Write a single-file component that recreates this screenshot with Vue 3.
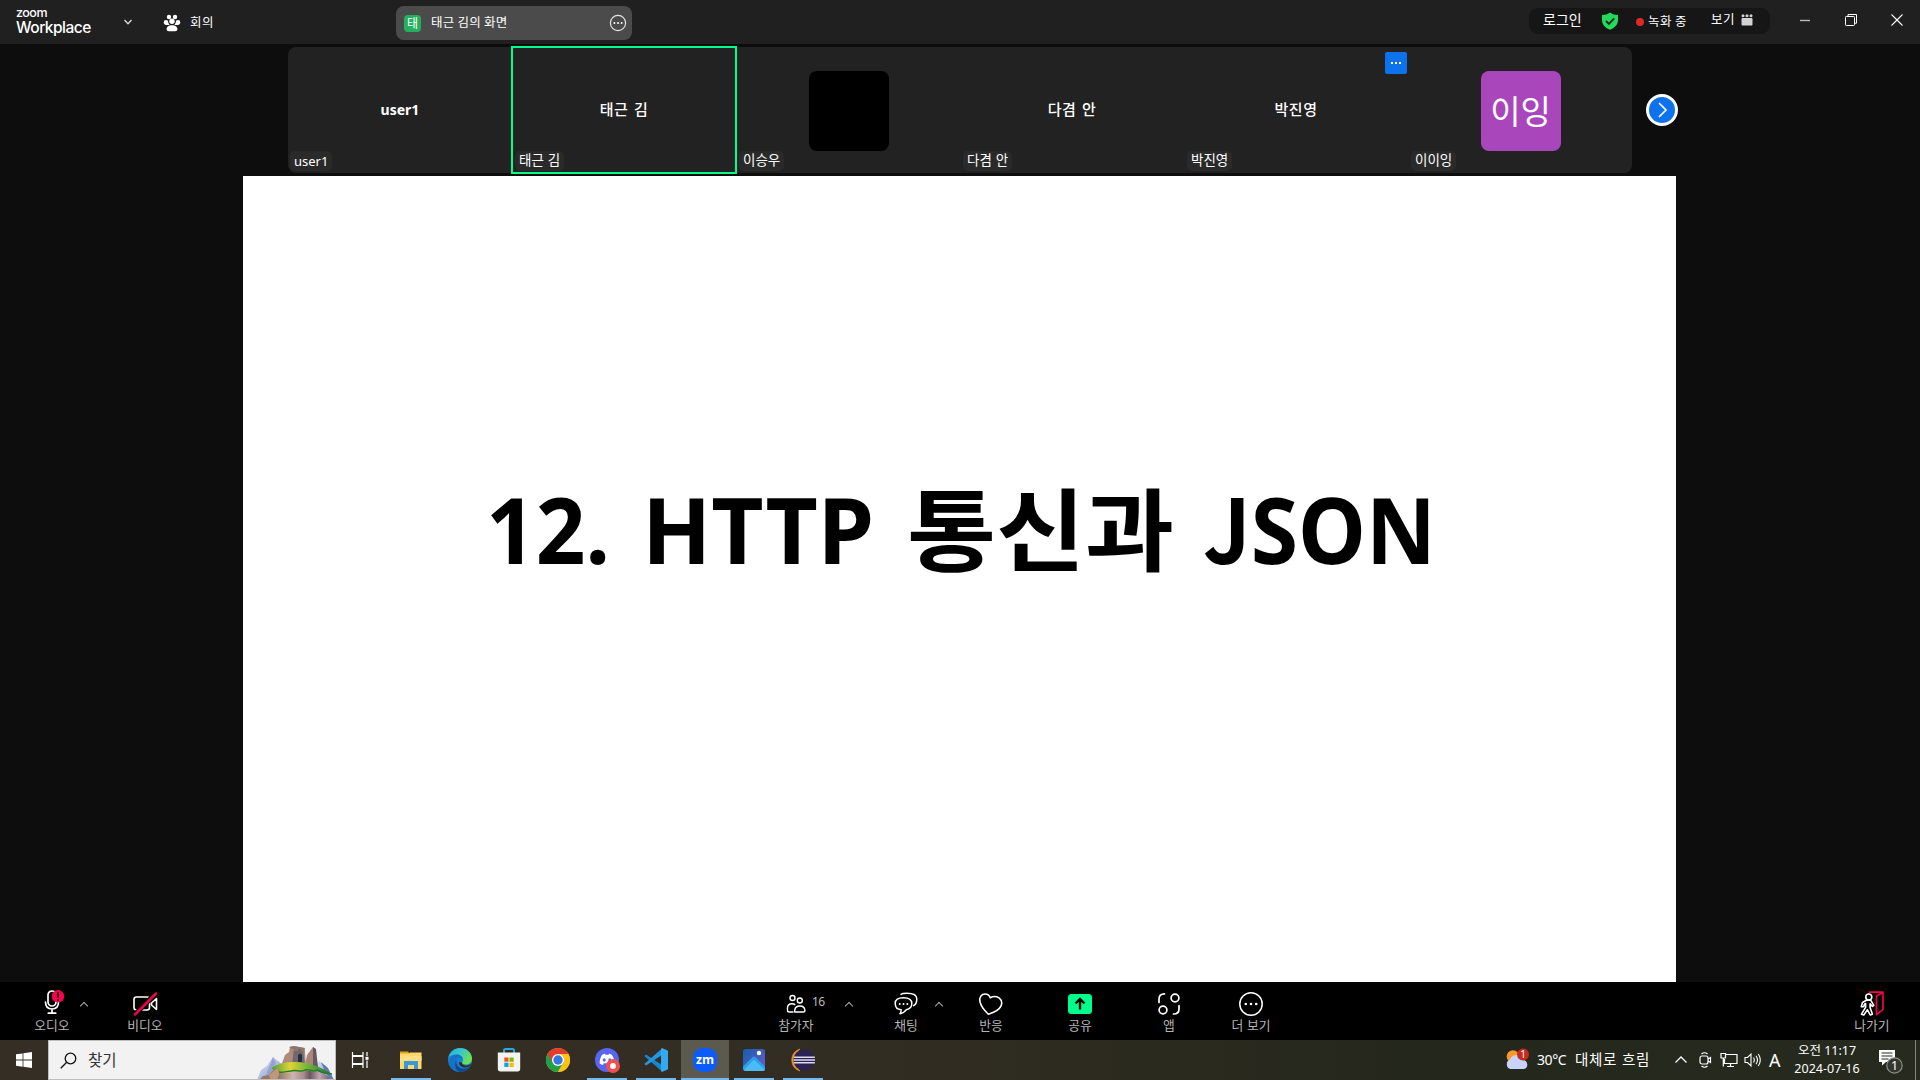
<script setup>
const participants = [
  { name: 'user1', center: 'user1', latin: true },
  { name: '태근 김', center: '태근 김', active: true },
  { name: '이승우', avatar: 'black' },
  { name: '다겸 안', center: '다겸 안' },
  { name: '박진영', center: '박진영', more: true },
  { name: '이이잉', avatar: 'purple', initials: '이잉' },
]
</script>

<template>
  <div class="desktop">
    <header class="titlebar">
      <div class="brand">
        <span class="brand-top">zoom</span>
        <span class="brand-main">Workplace</span>
      </div>
      <svg class="brand-chev" width="10" height="8" viewBox="0 0 10 8"><path d="M1.5 2 5 5.8 8.5 2" fill="none" stroke="#ddd" stroke-width="1.3" /></svg>
      <svg class="paw" width="18" height="18" viewBox="0 0 18 18" fill="#fff">
        <circle cx="6" cy="3" r="2.2" /><circle cx="12" cy="3" r="2.2" />
        <circle cx="3" cy="8.4" r="2.3" /><circle cx="15" cy="8.4" r="2.3" />
        <circle cx="9" cy="7.2" r="2.7" />
        <path d="M1.2 9h4.2l1.2 2H3zM16.800 9h-4.200l-1.200 2H15z" />
        <path d="M3.600 15.200c0-2.700 2.400-4 5.400-4s5.400 1.300 5.400 4c0 1.300-1 2-2.300 2H5.900c-1.300 0-2.300-.7-2.300-2z" />
      </svg>
      <span class="meeting">회의</span>
      <div class="share-tab">
        <span class="tab-badge">태</span>
        <span class="tab-label">태근 김의 화면</span>
        <svg width="18" height="18" viewBox="0 0 18 18"><circle cx="9" cy="9" r="7.600" fill="none" stroke="#e4e4e4" stroke-width="1.2" /><g fill="#fff"><circle cx="5.400" cy="9" r="1" /><circle cx="9" cy="9" r="1" /><circle cx="12.600" cy="9" r="1" /></g></svg>
      </div>
      <div class="status-pill">
        <span class="login">로그인</span>
        <svg class="shield" width="18" height="18" viewBox="0 0 18 18"><path d="M9 .5c2 1.700 4.700 2.500 8 2.500v5c0 4.700-3.400 8-8 9.700C4.400 16 1 12.700 1 8V3C4.300 3 7 2.200 9 .5z" fill="#23d959" /><path d="m5 9 2.900 2.900 5.300-5.600" fill="none" stroke="#1a2a1e" stroke-width="1.900" /></svg>
        <span class="rec-dot"></span>
        <span class="rec">녹화 중</span>
        <span class="view">보기</span>
        <svg class="clap" width="12" height="12" viewBox="0 0 12 12" fill="#d2d2d2"><rect x=".5" y="4" width="11" height="7.500" rx="1" /><circle cx="2" cy="1.800" r="1.500" /><circle cx="6" cy="1.800" r="1.500" /><circle cx="10" cy="1.800" r="1.500" /></svg>
      </div>
      <div class="win-btns">
        <svg width="14" height="14" viewBox="0 0 14 14"><path d="M2 7.500h10" stroke="#bbb" stroke-width="1.400" /></svg>
        <svg width="14" height="14" viewBox="0 0 14 14" fill="none" stroke="#fff"><rect x="1.500" y="3.500" width="9" height="9" rx=".8" /><path d="M4 3.200V1.500h8.500v8.700h-1.700" /></svg>
        <svg width="14" height="14" viewBox="0 0 14 14"><path d="m1.500 1.500 11 11m0-11-11 11" stroke="#fff" stroke-width="1.100" /></svg>
      </div>
    </header>

    <main class="stage">
      <div class="strip-row">
        <div class="strip">
          <div v-for="p in participants" :key="p.name" class="tile" :class="{ active: p.active }">
            <span v-if="p.center" class="tile-name" :class="{ latin: p.latin }">{{ p.center }}</span>
            <span v-if="p.avatar" class="avatar" :class="p.avatar">{{ p.initials }}</span>
            <span class="tag" :class="{ 'tag-latin': p.latin }">{{ p.name }}</span>
            <span v-if="p.more" class="more"><i></i><i></i><i></i></span>
          </div>
        </div>
        <div class="next">
          <svg width="32" height="32" viewBox="0 0 32 32"><circle cx="16" cy="16" r="14.500" fill="#0e72ed" stroke="#fff" stroke-width="3" /><path d="m13.500 9.500 6.500 6.500-6.500 6.500" fill="none" stroke="#fff" stroke-width="1.700" stroke-linecap="round" /></svg>
        </div>
      </div>
      <section class="slide">
        <svg width="1433" height="806" viewBox="243 176 1433 806" class="slide-text">
          <text x="486" y="564" textLength="124" lengthAdjust="spacingAndGlyphs">12.</text>
          <text x="642" y="564" textLength="232" lengthAdjust="spacingAndGlyphs">HTTP</text>
          <text class="ko" x="907" y="564" textLength="267" lengthAdjust="spacingAndGlyphs">통신과</text>
          <text x="1203" y="564" textLength="233" lengthAdjust="spacingAndGlyphs"><tspan class="cap-j">J</tspan>SON</text>
        </svg>
      </section>
    </main>

    <nav class="toolbar">
      <div class="tool audio">
        <svg width="26" height="28" viewBox="0 0 26 28" fill="none" stroke="#fff" stroke-width="1.700" stroke-linecap="round"><rect x="9" y="2" width="8" height="15" rx="4" /><path d="M6.500 13c0 4.500 2.500 7 6.500 7s6.500-2.500 6.500-7M13 20v4M9.300 24.200h7.400" /><circle cx="19" cy="7.300" r="6.200" fill="#ff0050" stroke="none" /><path d="M19 3.800v4.200m0 2.700v.2" stroke="#200008" stroke-width="2" /></svg>
        <span>오디오</span>
        <i class="caret"></i>
      </div>
      <div class="tool video">
        <svg width="26" height="28" viewBox="0 0 26 28" fill="none" stroke="#fff" stroke-width="1.600" stroke-linecap="round" stroke-linejoin="round"><rect x="2" y="8" width="15.500" height="13" rx="2.500" /><path d="m19.500 14 5-4.500v11l-5-4.500z" /><path d="M3.500 25 24 4" stroke="#000" stroke-width="5" /><path d="M3 25.500 24 4.500" stroke="#f0004e" stroke-width="2.500" /></svg>
        <span>비디오</span>
      </div>
      <div class="tool people">
        <svg width="26" height="28" viewBox="0 0 26 28" fill="none" stroke="#fff" stroke-width="1.400"><circle cx="9.500" cy="9" r="2.500" /><circle cx="16.800" cy="11.500" r="2.500" /><path d="M10.500 23H6c-1.100 0-1.500-.5-1.500-1.500V19c0-2.500 1.500-4.200 4.500-4.200 1.300 0 2.400.4 3.200 1.100" /><path d="M12 23h8.500c1 0 1.500-.7 1.400-1.600-.3-2.700-2-4.400-5-4.400s-4.900 1.700-5.200 4.400c-.1.900-.3 1.600.3 1.600z" /></svg>
        <span>참가자</span>
        <b class="count">16</b>
        <i class="caret"></i>
      </div>
      <div class="tool chat">
        <svg width="26" height="28" viewBox="0 0 26 28" fill="none" stroke="#fff" stroke-width="1.500" stroke-linecap="round" stroke-linejoin="round"><path d="M8 5.300C9 4.500 11 4.300 14 4.300c6 0 9.800 1.700 9.800 5.700 0 3.500-.9 5.500-3.200 6.700" /><path d="M10.500 8.800c-5.500 0-8.300 1.800-8.300 5.800s2.800 6 6 6.200c-.1 1.800-.3 2.700-1.200 4 2.500-.5 5-1.900 6.300-4.100 3.400-.6 5.500-2.500 5.500-6.100 0-4-2.800-5.800-8.300-5.800z" /><g fill="#fff" stroke="none"><circle cx="6.700" cy="15" r="1" /><circle cx="10.500" cy="15" r="1" /><circle cx="14.300" cy="15" r="1" /></g></svg>
        <span>채팅</span>
        <i class="caret"></i>
      </div>
      <div class="tool react">
        <svg width="26" height="28" viewBox="0 0 26 28" fill="none" stroke="#fff" stroke-width="1.600" stroke-linejoin="round"><path d="M10.300 25.200C7 22 3 17.500 2 12.800 1 8 3.500 5 7 5c2.600 0 4.300 1.400 5.300 3.700C14.300 7.600 16.500 7 18.800 7.800c4 1.300 6.200 5.200 4.300 9-1.900 4-7.500 6.800-12.800 8.400z" /></svg>
        <span>반응</span>
      </div>
      <div class="tool share">
        <svg width="26" height="28" viewBox="0 0 26 28"><rect x="1" y="5" width="24" height="20" rx="3.500" fill="#00ff8a" /><path d="M13 20.500v-10M8.500 14.500 13 10l4.500 4.500" fill="none" stroke="#000" stroke-width="2.400" /></svg>
        <span>공유</span>
      </div>
      <div class="tool apps">
        <svg width="26" height="28" viewBox="0 0 26 28" fill="none" stroke="#fff" stroke-width="1.700" stroke-linecap="round"><circle cx="19" cy="9" r="3.900" /><circle cx="7" cy="21" r="3.900" /><path d="M3 13.500V10c0-3.500 1.500-5.200 5.500-5.200M23 16.500V20c0 3.500-1.500 5-5.500 5" /></svg>
        <span>앱</span>
      </div>
      <div class="tool etc">
        <svg width="26" height="28" viewBox="0 0 26 28"><circle cx="13" cy="15" r="11.200" fill="none" stroke="#fff" stroke-width="1.500" /><g fill="#fff"><circle cx="7.800" cy="15" r="1.300" /><circle cx="13" cy="15" r="1.300" /><circle cx="18.200" cy="15" r="1.300" /></g></svg>
        <span>더 보기</span>
      </div>
      <div class="tool leave">
        <svg width="26" height="28" viewBox="0 0 26 28" fill="none" stroke-width="1.400" stroke-linejoin="round"><path d="M10 3.200h14v17.500l-6.500 5V7L24 3.500" stroke="#f0004e" stroke-width="1.700" /><g stroke="#fff" stroke-width="1.600"><circle cx="9.800" cy="8" r="3" /><path d="M7.800 11 3.500 13.500l-1.200 4.300h2.200l1.200-2.800.9-.5v3.800L2.500 25.200l2.300.8 3.700-5.200 2.700 5.200 2.200-.8-2.300-6.700v-3.800l2.300 2.800 1.400-1.200-3-5z" /></g></svg>
        <span>나가기</span>
      </div>
    </nav>

    <footer class="taskbar">
      <div class="start">
        <svg width="16" height="16" viewBox="0 0 16 16" fill="#fff"><path d="M0 2.300 6.600 1.400v6.200H0zM7.400 1.300 16 0v7.600H7.400zM0 8.400h6.600v6.300L0 13.800zM7.400 8.400H16V16l-8.600-1.200z" /></svg>
      </div>
      <div class="search">
        <svg class="lens" width="17" height="17" viewBox="0 0 17 17" fill="none" stroke="#111" stroke-width="1.300"><circle cx="10.500" cy="6.500" r="5.300" /><path d="M6.700 10.300.7 16.300" /></svg>
        <span>찾기</span>
        <svg class="castle" width="78" height="34" viewBox="0 0 78 34">
          <defs>
            <linearGradient id="grass"><stop offset="0" stop-color="#4d9e3a" /><stop offset=".3" stop-color="#e0d433" /><stop offset=".6" stop-color="#6fb43a" /><stop offset="1" stop-color="#1f7038" /></linearGradient>
            <linearGradient id="rock"><stop offset="0" stop-color="#8d705f" /><stop offset=".3" stop-color="#d0b3ac" /><stop offset=".5" stop-color="#a98c8c" /><stop offset=".62" stop-color="#6b5560" /><stop offset=".8" stop-color="#c0a5ae" /><stop offset="1" stop-color="#735f72" /></linearGradient>
            <linearGradient id="peak" x1="0" y1="0" x2="1" y2="1"><stop offset="0" stop-color="#dfe5f4" /><stop offset="1" stop-color="#8497cb" /></linearGradient>
          </defs>
          <path d="M0 34 4 24l6-4 6-9 10 8v15z" fill="url(#peak)" /><path d="m16 11 3 6-8 17H7z" fill="#93a4d3" />
          <path d="m56 22 6-7 8 7 7 12H55z" fill="url(#peak)" /><path d="m64 16 4 10 6 8h3l-6-12z" fill="#6478ba" />
          <path d="m24 20 4-11 4-3 1-5 3-1 11 2 1 3 1 16z" fill="#ac8d7d" /><path d="m35 19 2-17 9 1 2 16z" fill="#77676a" />
          <path d="m32 1 5-1 11 2-1 4-3-1v-2h-3v2h-4V3h-2z" fill="#8c7770" />
          <path d="m48 20 2-11 6-8 2 2v19z" fill="#a98678" /><path d="m56 1 3 2 2 18h-5z" fill="#67575e" />
          <path d="M41 9q2-3 4 0v7h-4z" fill="#1e3147" />
          <path d="m20 34 1-12 19-3 20 4 12 8 1 3z" fill="url(#rock)" />
          <path d="M15 22c6-5 14-6 23-6 14 0 26 5 37 12-6 0-11-1-15-3-4 3-8-2-12 0-5 3-10-1-14 1-4 2-8 0-12 1-4-1-7-3-7-5z" fill="url(#grass)" />
          <path d="M22 26c4 1 8-1 12-1 5-2 9 2 14-1 4-2 8 3 12 0 4 2 9 4 15 4" fill="none" stroke="#267a35" stroke-width="1.400" />
          <path d="m2 34 4-4 6-1 3-4 6-3 2 6-2 6z" fill="#9c7762" /><path d="m12 29 6-5 3-2 1 6-2 6h-6z" fill="#bc997c" />
        </svg>
      </div>
      <div class="apps-row">
        <div class="app">
          <svg width="18" height="18" viewBox="0 0 18 18" fill="none" stroke="#fff" stroke-width="1.200"><path d="M1.500 1v3.500h10.500V1M1.500 17v-3.500h10.500V17M1.500 5.500h10.500v7H1.500zM16 1v4M16 9.500V17" /><path d="M14.500 7.300h3" stroke-width="3" /></svg>
        </div>
        <div class="app run explorer">
          <svg width="24" height="24" viewBox="0 0 24 24"><path d="M1 3.500h8l2 2.500H1z" fill="#e0a21b" /><path d="M1 5.500h9l1-1h11.500V21H1z" fill="#ffd76a" /><path d="M1 8h21.500v5H1z" fill="#ffdf82" /><path d="M5 21v-8h14v8h-4v-4H9v4z" fill="#3c97d8" /></svg>
        </div>
        <div class="app">
          <svg width="24" height="24" viewBox="0 0 24 24"><defs><linearGradient id="edge" x1="0" y1="0" x2="1" y2=".5"><stop offset="0" stop-color="#2aa9e8" /><stop offset=".5" stop-color="#37c6d0" /><stop offset="1" stop-color="#6be04f" /></linearGradient></defs><circle cx="12" cy="12" r="12" fill="#1b7fd1" /><path d="M.3 10C1.500 4 6.500 0 12 0c7 0 12 5 12 10.500 0 4-3 6-6 6-2.500 0-4-1-4-2 0-.8 1-1 1-3 0-2.500-2.500-5-6.500-5C4.500 6.500 1.500 8 .3 10z" fill="url(#edge)" /><path d="M8.500 11c-2 5 2 11 8 11.300C9 26 2 21 1 15c-.5-5 4-8.500 7.500-8.500 3 0 6 2 6 5 0-1.500-4.500-3-6-.5z" fill="#1273c7" /><path d="M8.300 12c-.5 4 2 8 6.500 8.500 3 .3 6-1 7.500-2.800C20 23 15 24.500 12 24c-4-1-6-6.500-3.700-12z" fill="#114a8b" /><path d="M14 14.500c-.5 1.500 2 3.500 5 3 1.500-.2 3-.8 4-2l-.7 2.200c-2 1.500-5 2.300-8 1.200-2.800-1.200-3.500-3-3-5z" fill="#302d26" /></svg>
        </div>
        <div class="app">
          <svg width="24" height="24" viewBox="0 0 24 24"><path d="M7 5V2.500C7 1.500 7.500 1 8.500 1h7c1 0 1.500.5 1.500 1.500V5" fill="none" stroke="#28a8e0" stroke-width="2" /><path d="M.8 4.500h22.400V21c0 1.500-1 2.500-2.500 2.500H3.300C1.800 23.500.8 22.500.8 21z" fill="#f3f3f3" /><path d="M7.300 9.500h4.200v4.200H7.300z" fill="#f25022" /><path d="M12.500 9.500h4.200v4.200h-4.200z" fill="#7fba00" /><path d="M7.300 14.700h4.200v4.200H7.300z" fill="#00a4ef" /><path d="M12.500 14.700h4.200v4.200h-4.200z" fill="#ffb900" /></svg>
        </div>
        <div class="app">
          <svg width="24" height="24" viewBox="0 0 24 24"><circle cx="12" cy="12" r="12" fill="#fbc117" /><path d="M12 12 1.600 6A12 12 0 0 0 12 24l5.200-9z" fill="#21a04a" /><path d="M12 0A12 12 0 0 1 22.400 6H12l-5.200 9L1.600 6A12 12 0 0 1 12 0z" fill="#e33b2e" /><path d="M12 6h10.400A12 12 0 0 1 12 24l5.200-9z" fill="#fbc117" /><circle cx="12" cy="12" r="6" fill="#fff" /><circle cx="12" cy="12" r="4.700" fill="#3478e5" /></svg>
        </div>
        <div class="app run">
          <svg width="26" height="26" viewBox="0 0 26 26"><circle cx="13" cy="13" r="12" fill="#5865f2" /><path d="M8 8c1-1 2.500-1.300 3-1.300l.5 1h3l.5-1c.5 0 2 .3 3 1.300 2 3 2.500 6 2.300 8.500-1 .8-2.300 1.300-3.300 1.400l-.8-1.600H9.800L9 17.900c-1-.1-2.300-.6-3.300-1.400C5.500 14 6 11 8 8z" fill="#fff" /><ellipse cx="10.200" cy="13" rx="1.500" ry="1.700" fill="#5865f2" /><ellipse cx="15.800" cy="13" rx="1.500" ry="1.700" fill="#5865f2" /><circle cx="19" cy="19" r="7" fill="#ef4f4f" /><circle cx="19" cy="19" r="2.900" fill="#fff" /></svg>
        </div>
        <div class="app run">
          <svg width="24" height="24" viewBox="0 0 24 24"><path d="M2 6.500.3 8 18 23.500V17z" fill="#1686d0" /><path d="M2 17.500.3 16 18 .5V7z" fill="#2497df" /><path d="M18 0l6 2.800v18.400L18 24l-1-1V1z" fill="#33a9f2" /></svg>
        </div>
        <div class="app run current">
          <svg width="24" height="24" viewBox="0 0 24 24"><rect width="24" height="24" rx="9.500" fill="#0b5cff" /><text x="12" y="15.500" text-anchor="middle" textLength="18" lengthAdjust="spacingAndGlyphs" class="zm">zm</text></svg>
        </div>
        <div class="app run">
          <svg width="24" height="24" viewBox="0 0 24 24"><defs><linearGradient id="photo" x1="0" y1="0" x2="1" y2="1"><stop offset="0" stop-color="#135fae" /><stop offset="1" stop-color="#7259c2" /></linearGradient></defs><rect x="1" y="1" width="22" height="22" rx="2.500" fill="url(#photo)" /><path d="M1 18.500 10.700 9q1.300-1 2.600 0L23 18.500v2c0 1.500-1 2.500-2.500 2.500h-17C2 23 1 22 1 20.500z" fill="#2d9fe9" /><path d="M2 22 11 12.500q1-1 2 0L23 22q-1 1-2.500 1h-17Q2.500 23 2 22z" fill="#55c8fa" opacity=".7" /><circle cx="17" cy="5" r="2.200" fill="#fff" /></svg>
        </div>
        <div class="app run">
          <svg width="24" height="24" viewBox="0 0 24 24"><path d="M9 1C-2 4-2 20 9 23 3 17 3 7 9 1z" fill="#f7941e" stroke="#e28a22" stroke-width=".6" /><circle cx="13" cy="12" r="10.600" fill="#2c2255" /><path d="M2.800 9.200h21M2.600 12h21.400M2.800 14.800h21" stroke="#dedbe8" stroke-width="1.500" /></svg>
        </div>
      </div>
      <div class="tray">
        <svg class="weather" width="26" height="24" viewBox="0 0 26 24"><circle cx="9" cy="8.500" r="6.300" fill="#f79a28" /><path d="M6.500 21a5 5 0 0 1-.5-9.500C7 8.500 9.500 7 12.500 7c3.500 0 5.500 2 6.300 5A4.600 4.600 0 0 1 20 21z" fill="#c9d2fb" /><circle cx="19" cy="6.500" r="6" fill="#c42b1c" /><text x="19" y="10" text-anchor="middle" class="alert-count">1</text></svg>
        <span class="temp">30°C</span>
        <span class="forecast">대체로 흐림</span>
        <svg class="up" width="14" height="14" viewBox="0 0 14 14"><path d="m1.500 9.500 5.500-5.500 5.500 5.500" fill="none" stroke="#fff" stroke-width="1.300" /></svg>
        <svg class="cam" width="14" height="18" viewBox="0 0 14 18" fill="none" stroke="#fff" stroke-width="1.200"><rect x="1" y="5" width="8" height="8" rx="2" /><path d="m9 8 2.500-1.500v5L9 10M2.500 3Q5.500.5 8.500 3M2.500 15q3 2.500 6 0" /></svg>
        <svg class="net" width="18" height="16" viewBox="0 0 18 16" fill="none" stroke="#fff" stroke-width="1.200"><path d="M5.500 2.500H17v9H4.500V7M1 1.500h4.500V6H1zM10.500 11.500V14M7 14.500h7M3.300 6v8.500" /></svg>
        <svg class="vol" width="18" height="16" viewBox="0 0 18 16" fill="none" stroke="#fff" stroke-width="1.100"><path d="M1 5.500h2.500L7 2v12l-3.500-3.500H1zM9.500 5.500q1.700 2.500 0 5M12 3.700q3 4.300 0 8.600M14.300 2q4 6 0 12" /></svg>
        <span class="ime">A</span>
        <div class="clock"><span>오전 11:17</span><span>2024-07-16</span></div>
        <div class="notice">
          <svg width="28" height="28" viewBox="0 0 28 28"><path d="M3 4h16v12H10l-4 3.500V16H3z" fill="#fff" /><path d="M5.500 7h11M5.500 10h11M5.500 13h7" stroke="#272a1f" stroke-width="1.200" /><circle cx="18.500" cy="19.500" r="7.700" fill="#33352f" stroke="#8d8f88" stroke-width="1.200" /><text x="18.500" y="24" text-anchor="middle" class="notice-count">1</text></svg>
        </div>
        <i class="edge-line"></i>
      </div>
    </footer>
  </div>
</template>

<style>
body { background: #0d0d0d; overflow: hidden; }
</style>

<style scoped>
.desktop { width: 1920px; height: 1080px; display: flex; flex-direction: column; overflow: hidden; color: #fff; background: #0d0d0d; font-family: "Noto Sans", "Noto Sans CJK KR", sans-serif; font-size: 13px; white-space: nowrap; }
svg { display: block; flex: none; }
.titlebar { height: 44px; flex: none; display: flex; align-items: center; background: #202020; font-family: "Noto Sans CJK KR", sans-serif; font-size: 12.500px; }
.brand { width: 75px; margin-left: 16px; height: 44px; display: flex; flex-direction: column; font-family: Inter, sans-serif; }
.brand-top { font-size: 12.500px; line-height: 12px; margin-top: 7px; letter-spacing: -.5px; font-weight: 500; }
.brand-main { font-size: 15.500px; line-height: 16px; margin-top: 1px; font-weight: 500; letter-spacing: -.5px; }
.brand-chev { margin-left: 32px; }
.paw { margin-left: 30px; margin-top: 2px; }
.meeting { margin-left: 9px; width: 24px; letter-spacing: .5px; margin-top: -2px; }
.share-tab { width: 236px; height: 34px; margin-left: 182px; margin-top: 2px; border-radius: 8px; background: #4b4b4b; display: flex; align-items: center; box-sizing: border-box; padding: 0 5px 0 8px; }
.tab-badge { width: 17px; height: 17px; border-radius: 4px; background: #27ae60; text-align: center; line-height: 15px; font-size: 12px; }
.tab-label { margin-left: 10px; flex: 1; line-height: 30px; margin-top: -3px; letter-spacing: .25px; }
.status-pill { width: 241px; height: 26px; margin-left: 897px; margin-top: -2px; background: #161616; border-radius: 9px; display: flex; align-items: center; }
.login { margin-left: 14px; width: 40px; font-size: 14px; line-height: 20px; margin-top: -5px; }
.shield { margin-left: 18px; }
.rec-dot { width: 8px; height: 8px; border-radius: 50%; background: #e02828; margin-left: 17px; margin-top: 2px; }
.rec { margin-left: 4px; width: 41px; letter-spacing: .4px; margin-top: -1px; }
.view { margin-left: 22px; width: 25px; line-height: 20px; margin-top: -5px; letter-spacing: .4px; }
.clap { margin-left: 5px; margin-top: -2px; }
.win-btns { display: flex; gap: 32px; margin-left: 28px; margin-top: -4px; }
.stage { height: 938px; flex: none; }
.strip-row { height: 132px; display: flex; padding-left: 288px; box-sizing: border-box; }
.strip { margin-top: 3px; height: 126px; width: 1344px; display: flex; background: #222; border-radius: 8px; }
.tile { position: relative; width: 224px; height: 126px; display: flex; align-items: center; justify-content: center; }
.active::before { content: ""; position: absolute; inset: -1px; border: 2px solid #00ff8a; }
.tile-name { font-family: "Noto Sans CJK KR", sans-serif; font-size: 15px; font-weight: 500; margin-top: -4px; letter-spacing: .6px; word-spacing: 1.500px; }
.tile-name.latin { font-family: "Noto Sans", sans-serif; font-weight: 700; font-size: 14px; margin-top: -2px; letter-spacing: 0; }
.avatar { width: 80px; height: 80px; margin: 1px 0 0 1px; border-radius: 8px; text-align: center; font: 33px/78px "Noto Sans CJK KR", sans-serif; }
.avatar.black { background: #000; }
.avatar.purple { background: #a946bb; }
.tag { position: absolute; left: 3px; bottom: 2px; height: 20px; padding: 0 4px; border-radius: 5px; background: #2a2a2a; font: 13.500px/17px "Noto Sans CJK KR", sans-serif; word-spacing: 1px; }
.tag-latin { left: 2px; font: 13px/20px "Noto Sans", sans-serif; }
.more { position: absolute; right: 1px; top: 5px; width: 22px; height: 22px; border-radius: 2px; background: #0e72ed; display: flex; align-items: center; justify-content: center; gap: 2px; }
.more i { width: 2px; height: 2px; background: #fff; }
.next { margin: 50px 0 0 14px; }
.slide { width: 1433px; height: 806px; margin-left: 243px; background: #fff; }
.slide-text text { font-family: "Noto Sans", sans-serif; font-weight: 700; font-size: 91px; fill: #000; }
.slide-text .ko { font-family: "Noto Sans CJK KR", sans-serif; font-size: 90px; }
.slide-text .cap-j { font-family: "Noto Sans CJK KR", sans-serif; font-size: 89px; }
.toolbar { height: 58px; flex: none; background: #000; display: flex; }
.tool { position: relative; width: 60px; display: flex; flex-direction: column; align-items: center; padding-top: 7px; box-sizing: border-box; }
.tool span { font: 12.800px/18px "Noto Sans CJK KR", sans-serif; color: #b4b4b4; margin-top: -1px; }
.audio { margin-left: 22px; }
.video { margin-left: 33px; }
.people { margin-left: 591px; }
.chat { margin-left: 50px; }
.react { margin-left: 25px; }
.share, .apps { margin-left: 29px; }
.etc { margin-left: 22px; word-spacing: 1px; }
.leave { margin-left: 561px; }
.caret { position: absolute; left: 59px; top: 21px; width: 5px; height: 5px; border: solid #aaa; border-width: 1.300px 0 0 1.300px; transform: rotate(45deg); }
.people .caret { left: 80px; }
.chat .caret { left: 60px; }
.count { position: absolute; left: 46px; top: 12px; font: 12px/16px "Noto Sans", sans-serif; color: #bbb; letter-spacing: -.5px; }
.taskbar { height: 40px; flex: none; display: flex; background: linear-gradient(90deg, #352e25, #322d23 45%, #24271c 75%, #272a1f); }
.start { width: 48px; display: flex; align-items: center; justify-content: center; }
.search { width: 288px; height: 40px; box-sizing: border-box; border: 1px solid #bdbdbd; background: #f2f2f2; display: flex; align-items: center; color: #333; font: 15.500px "Noto Sans CJK KR", sans-serif; padding-left: 11px; overflow: hidden; }
.search span { margin-left: 11px; flex: 1; margin-top: -2px; }
.castle { margin-top: 5px; }
.apps-row { display: flex; gap: 1px; }
.app { position: relative; width: 48px; height: 40px; display: flex; align-items: center; justify-content: center; }
.explorer { margin-left: 2px; }
.run::after { content: ""; position: absolute; left: 4px; right: 4px; bottom: 0; height: 2px; background: #76b9ed; }
.current { background: #5c5a4f; }
.current::after { left: 0; right: 0; }
.zm { font: 700 12px "Open Sans", sans-serif; fill: #fff; }
.tray { margin-left: auto; display: flex; align-items: center; width: 416px; }
.temp { margin-left: 7px; width: 34px; font-size: 14px; letter-spacing: -.4px; margin-top: -1px; }
.forecast { width: 75px; margin-left: 4px; font: 14.500px "Noto Sans CJK KR", sans-serif; margin-top: -3px; letter-spacing: .7px; word-spacing: 1px; }
.up { margin-left: 24px; }
.cam { margin-left: 11px; }
.net { margin-left: 7px; }
.vol { margin-left: 6px; }
.ime { width: 14px; margin-left: 7px; font-size: 18px; line-height: 20px; }
.clock { width: 76px; margin-left: 6px; display: flex; flex-direction: column; align-items: center; font-size: 12.500px; line-height: 18px; }
.notice { margin-left: 11px; }
.edge-line { width: 1px; height: 40px; background: #85867d; margin-left: 11px; }
.alert-count { font: 10px "Noto Sans", sans-serif; fill: #fff; }
.notice-count { font: 12.500px "Noto Sans", sans-serif; fill: #fff; }
</style>
